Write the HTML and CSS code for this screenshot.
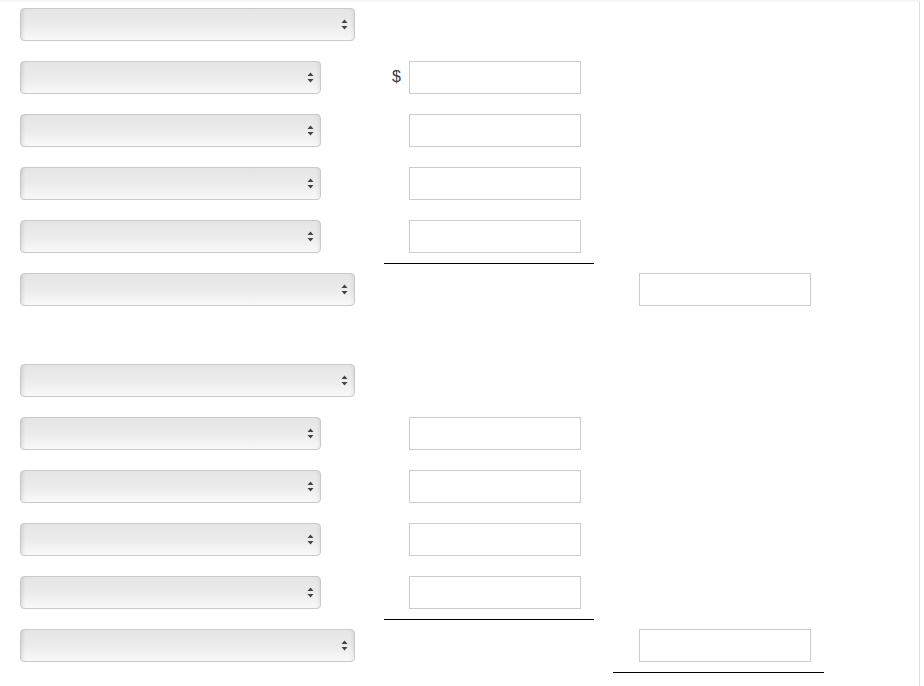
FILE: index.html
```html
<!DOCTYPE html>
<html>
<head>
<meta charset="utf-8">
<link rel="stylesheet" href="styles.css">
</head>
<body>
<div class="page">
  <div class="section">
    <div class="row">
      <div class="c1"><div class="select wide"><svg class="arr" width="7" height="11" viewBox="0 0 7 11"><path d="M3.5 0.5 L6.5 4 L0.5 4 Z M0.5 7 L6.5 7 L3.5 10.5 Z" fill="#444"/></svg></div></div>
    </div>
    <div class="row">
      <div class="c1"><div class="select narrow"><svg class="arr" width="7" height="11" viewBox="0 0 7 11"><path d="M3.5 0.5 L6.5 4 L0.5 4 Z M0.5 7 L6.5 7 L3.5 10.5 Z" fill="#444"/></svg></div></div>
      <div class="c2"><span class="cur">$</span><div class="input"></div></div>
    </div>
    <div class="row">
      <div class="c1"><div class="select narrow"><svg class="arr" width="7" height="11" viewBox="0 0 7 11"><path d="M3.5 0.5 L6.5 4 L0.5 4 Z M0.5 7 L6.5 7 L3.5 10.5 Z" fill="#444"/></svg></div></div>
      <div class="c2"><span class="cur"></span><div class="input"></div></div>
    </div>
    <div class="row">
      <div class="c1"><div class="select narrow"><svg class="arr" width="7" height="11" viewBox="0 0 7 11"><path d="M3.5 0.5 L6.5 4 L0.5 4 Z M0.5 7 L6.5 7 L3.5 10.5 Z" fill="#444"/></svg></div></div>
      <div class="c2"><span class="cur"></span><div class="input"></div></div>
    </div>
    <div class="row">
      <div class="c1"><div class="select narrow"><svg class="arr" width="7" height="11" viewBox="0 0 7 11"><path d="M3.5 0.5 L6.5 4 L0.5 4 Z M0.5 7 L6.5 7 L3.5 10.5 Z" fill="#444"/></svg></div></div>
      <div class="c2"><span class="cur"></span><div class="input"></div></div>
    </div>
    <div class="rule mid"></div>
    <div class="row">
      <div class="c1"><div class="select wide"><svg class="arr" width="7" height="11" viewBox="0 0 7 11"><path d="M3.5 0.5 L6.5 4 L0.5 4 Z M0.5 7 L6.5 7 L3.5 10.5 Z" fill="#444"/></svg></div></div>
      <div class="c2"></div>
      <div class="c3"><div class="input"></div></div>
    </div>
  </div>

  <div class="section second">
    <div class="row">
      <div class="c1"><div class="select wide"><svg class="arr" width="7" height="11" viewBox="0 0 7 11"><path d="M3.5 0.5 L6.5 4 L0.5 4 Z M0.5 7 L6.5 7 L3.5 10.5 Z" fill="#444"/></svg></div></div>
    </div>
    <div class="row">
      <div class="c1"><div class="select narrow"><svg class="arr" width="7" height="11" viewBox="0 0 7 11"><path d="M3.5 0.5 L6.5 4 L0.5 4 Z M0.5 7 L6.5 7 L3.5 10.5 Z" fill="#444"/></svg></div></div>
      <div class="c2"><span class="cur"></span><div class="input"></div></div>
    </div>
    <div class="row">
      <div class="c1"><div class="select narrow"><svg class="arr" width="7" height="11" viewBox="0 0 7 11"><path d="M3.5 0.5 L6.5 4 L0.5 4 Z M0.5 7 L6.5 7 L3.5 10.5 Z" fill="#444"/></svg></div></div>
      <div class="c2"><span class="cur"></span><div class="input"></div></div>
    </div>
    <div class="row">
      <div class="c1"><div class="select narrow"><svg class="arr" width="7" height="11" viewBox="0 0 7 11"><path d="M3.5 0.5 L6.5 4 L0.5 4 Z M0.5 7 L6.5 7 L3.5 10.5 Z" fill="#444"/></svg></div></div>
      <div class="c2"><span class="cur"></span><div class="input"></div></div>
    </div>
    <div class="row">
      <div class="c1"><div class="select narrow"><svg class="arr" width="7" height="11" viewBox="0 0 7 11"><path d="M3.5 0.5 L6.5 4 L0.5 4 Z M0.5 7 L6.5 7 L3.5 10.5 Z" fill="#444"/></svg></div></div>
      <div class="c2"><span class="cur"></span><div class="input"></div></div>
    </div>
    <div class="rule mid"></div>
    <div class="row">
      <div class="c1"><div class="select wide"><svg class="arr" width="7" height="11" viewBox="0 0 7 11"><path d="M3.5 0.5 L6.5 4 L0.5 4 Z M0.5 7 L6.5 7 L3.5 10.5 Z" fill="#444"/></svg></div></div>
      <div class="c2"></div>
      <div class="c3"><div class="input"></div></div>
    </div>
    <div class="rule right"></div>
  </div>
</div>
</body>
</html>
```

FILE: styles.css
```css
html, body {
  margin: 0;
  padding: 0;
  background: #fff;
  font-family: "Liberation Sans", Arial, sans-serif;
}

.page {
  width: 920px;
  height: 686px;
  border-right: 1px solid #dddddd;
  border-top: 2px solid #f6f6f6;
  box-sizing: border-box;
  padding: 6px 0 0 20px;
  overflow: hidden;
}

.section {
  display: flex;
  flex-direction: column;
}

.section.second {
  margin-top: 38px;
}

.row {
  display: grid;
  grid-template-columns: 364px 229px 211px;
  height: 33px;
  margin-bottom: 20px;
  align-items: start;
}

.select {
  height: 33px;
  box-sizing: border-box;
  border: 1px solid #cacaca;
  border-radius: 4px;
  background: linear-gradient(#e5e5e5, #ebebeb 50%, #f9f9f9);
  box-shadow: inset 4px 0 3px -2px rgba(0, 0, 0, 0.09), inset -4px 0 3px -2px rgba(0, 0, 0, 0.05);
  display: flex;
  align-items: center;
  justify-content: flex-end;
  padding-right: 6px;
}

.select.wide { width: 335px; }
.select.narrow { width: 301px; }

.arr {
  display: block;
}

.c2 {
  display: flex;
  align-items: flex-start;
}

.cur {
  width: 25px;
  box-sizing: border-box;
  padding: 6px 8px 0 0;
  text-align: right;
  font-size: 16px;
  line-height: 20px;
  color: #333a44;
}

.input {
  width: 172px;
  height: 33px;
  box-sizing: border-box;
  border: 1px solid #cccccc;
  background: #fff;
}

.c3 {
  padding-left: 26px;
}

.rule {
  height: 1px;
  background: #000;
  margin-top: -10px;
  margin-bottom: 9px;
}

.rule.mid {
  margin-left: 364px;
  width: 210px;
}

.rule.right {
  margin-left: 593px;
  width: 211px;
}
```
